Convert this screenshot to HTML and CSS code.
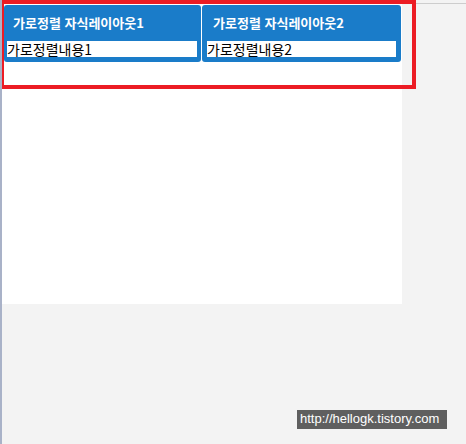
FILE: index.html
```
<!DOCTYPE html>
<html lang="ko">
<head>
<meta charset="utf-8">
<link rel="stylesheet" href="styles.css">
</head>
<body>
<div class="screen">
  <div class="canvas">
    <div class="row">
      <div class="panel panel-1">
        <div class="title">가로정렬 자식레이아웃1</div>
        <div class="field">가로정렬내용1</div>
      </div>
      <div class="panel panel-2">
        <div class="title">가로정렬 자식레이아웃2</div>
        <div class="field">가로정렬내용2</div>
      </div>
    </div>
  </div>
  <div class="side"></div>
  <div class="highlight"></div>
  <div class="watermark">http://hellogk.tistory.com</div>
</div>
</body>
</html>
```
FILE: styles.css
```
html, body {
  margin: 0;
  padding: 0;
}
body {
  background: #f3f3f3;
  font-family: "Noto Sans CJK KR", "Noto Sans", sans-serif;
}
.screen {
  position: relative;
  width: 466px;
  height: 444px;
  display: flex;
  align-items: flex-start;
  box-sizing: border-box;
  border-left: 2px solid #a9b2c8;
  overflow: hidden;
}
.canvas {
  width: 400px;
  height: 304px;
  background: #ffffff;
  box-sizing: border-box;
  padding: 5px 0 0 2px;
  flex: none;
}
.row {
  display: flex;
  gap: 1px;
}
.panel {
  background: #1a7cc9;
  border-radius: 3px;
  height: 57px;
  box-sizing: border-box;
  display: flex;
  flex-direction: column;
}
.panel-1 {
  width: 197px;
  padding: 0 4px 0 3px;
}
.panel-2 {
  width: 199px;
  padding: 0 5px 0 5px;
}
.title {
  height: 36px;
  line-height: 36px;
  padding-left: 6px;
  color: #ffffff;
  font-weight: bold;
  font-size: 13px;
  white-space: nowrap;
}
.field {
  height: 16px;
  line-height: 16px;
  background: #ffffff;
  color: #000000;
  font-size: 14px;
  padding-left: 0;
  white-space: nowrap;
}
.side {
  flex: 1;
  margin-top: 3px;
  border-top: 1px solid #cdcdcd;
}
.highlight {
  position: absolute;
  left: -2px;
  top: 0;
  width: 416px;
  height: 89px;
  box-sizing: border-box;
  border: 4px solid #ec1c24;
}
.watermark {
  position: absolute;
  left: 295px;
  top: 410px;
  width: 150px;
  height: 19px;
  background: #5f5f5f;
  color: #ffffff;
  font-family: "Liberation Sans", Arial, sans-serif;
  font-size: 13px;
  line-height: 18px;
  padding-left: 3px;
  box-sizing: border-box;
  white-space: nowrap;
}
```
